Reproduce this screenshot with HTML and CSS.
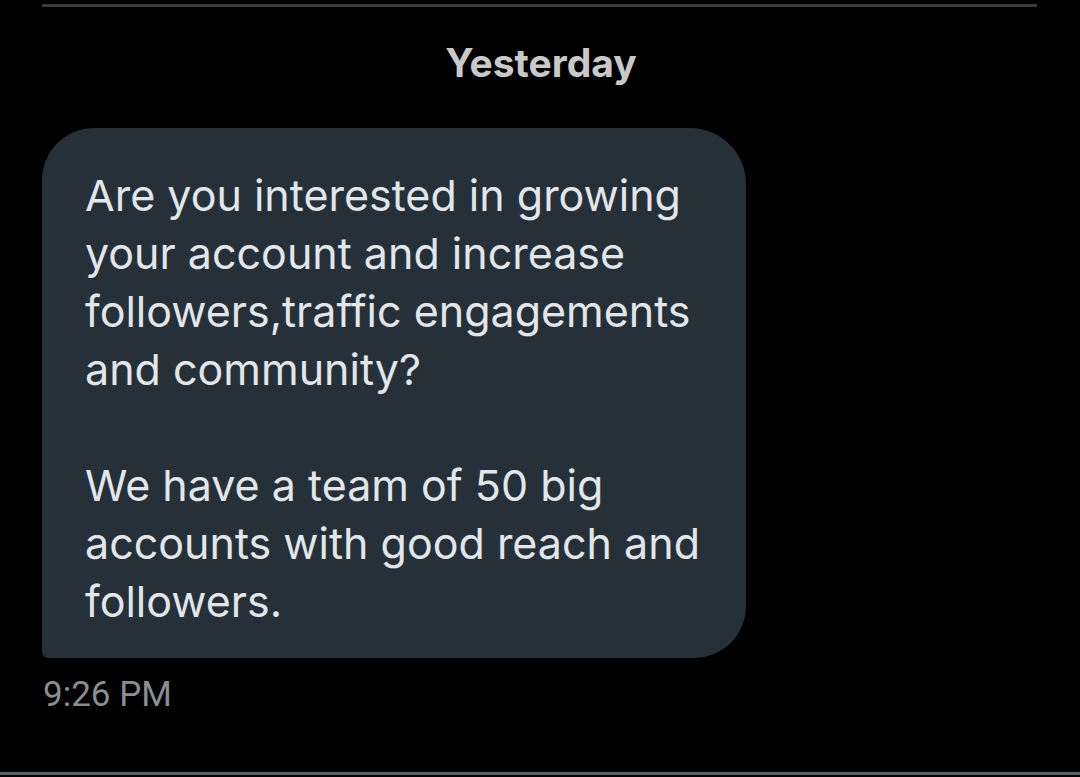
FILE: index.html
```html
<!DOCTYPE html>
<html lang="en">
<head>
<meta charset="utf-8">
<title>Message</title>
<link rel="stylesheet" href="styles.css">
</head>
<body>
<div class="screen">
  <div class="top-rule"></div>
  <div class="day">Yesterday</div>
  <div class="thread">
    <div class="bubble">
      <p>Are you interested in growing your account and increase followers,traffic engagements and community?</p>
      <p>We have a team of 50 big accounts with good reach and followers.</p>
    </div>
    <div class="time">9:26 PM</div>
  </div>
  <div class="bottom-rule"></div>
</div>
</body>
</html>
```

FILE: styles.css
```css
* { box-sizing: border-box; }
html, body { margin: 0; padding: 0; background: #000; }
.screen {
  width: 1080px;
  height: 777px;
  display: flex;
  flex-direction: column;
  background: #000;
  overflow: hidden;
}
.top-rule {
  margin: 4px 43px 0 42px;
  height: 3px;
  background: #3a3a3d;
}
.day {
  margin-top: 33px;
  text-align: center;
  font-family: "Inter", "Liberation Sans", sans-serif;
  font-weight: 700;
  font-size: 39px;
  line-height: 46px;
  color: #c9c9c9;
  padding-left: 2px;
}
.thread {
  margin-top: 42px;
  padding-left: 42px;
}
.bubble {
  width: 704px;
  background: #253038;
  border-radius: 52px 56px 52px 6px;
  padding: 38px 28px 28px 43px;
  font-family: "Inter", "Liberation Sans", sans-serif;
  font-size: 43px;
  line-height: 58px;
  color: #e3e6e8;
}
.bubble p { margin: 0; }
.bubble p + p { margin-top: 58px; }
.time {
  margin-top: 17px;
  padding-left: 1px;
  font-family: "Roboto", "Liberation Sans", sans-serif;
  font-size: 35px;
  line-height: 40px;
  color: #8a8e93;
}
.bottom-rule {
  margin-top: auto;
  margin-bottom: 2px;
  height: 3px;
  background: #5b6168;
}
```
